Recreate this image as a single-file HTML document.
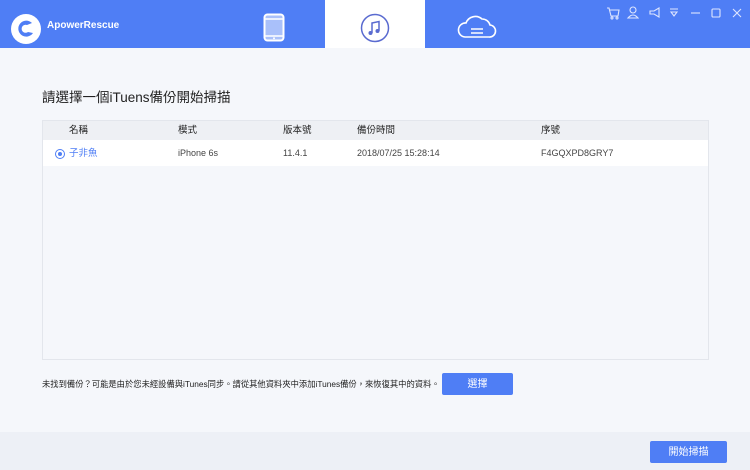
<!DOCTYPE html>
<html><head><meta charset="utf-8"><style>
*{margin:0;padding:0;box-sizing:border-box}
body{width:750px;height:470px;overflow:hidden;background:#f5f7fb;font-family:"Liberation Sans","Noto Sans CJK TC",sans-serif;position:relative;line-height:1}
.hdr{position:absolute;left:0;top:0;width:750px;height:48px;background:#4f7ef5}
.tab{position:absolute;left:325px;top:0;width:100px;height:48px;background:#fff}
.abs{position:absolute}
.t{font-size:11px;color:#222;position:absolute;line-height:1}
.btn{position:absolute;background:#4f7ef5;border-radius:2px;color:#fff;font-size:10px;text-align:center;padding-top:7px}
</style></head><body>
<div class="hdr"></div>
<div class="tab"></div>
<svg class="abs" style="left:9px;top:12px" width="34" height="34" viewBox="0 0 34 34">
<circle cx="17" cy="17" r="15" fill="#fff"/>
<path d="M23 11 A8 8 0 1 0 24 21 L19 20 A4 4 0 1 1 18 13 Z" fill="#4f7ef5"/>
</svg>
<div class="abs" style="left:47px;top:21px;color:#fff;font-size:10px;font-weight:bold">ApowerRescue</div>
<svg class="abs" style="left:263px;top:13px" width="22" height="29" viewBox="0 0 22 29">
<rect x="1.5" y="1.5" width="19" height="26" rx="3" fill="#a9c0fa" stroke="#fff" stroke-width="2"/>
<line x1="1.5" y1="6" x2="20.5" y2="6" stroke="#fff" stroke-width="1.5"/>
<line x1="1.5" y1="23" x2="20.5" y2="23" stroke="#fff" stroke-width="1.5"/>
<circle cx="11" cy="25.3" r="1" fill="#fff"/>
</svg>
<svg class="abs" style="left:360px;top:13px" width="30" height="30" viewBox="0 0 30 30">
<circle cx="15" cy="15" r="13.5" fill="none" stroke="#5a6bd0" stroke-width="1.5"/>
<path d="M12 20 V10 L19 8.5 V18" fill="none" stroke="#5a6bd0" stroke-width="1.5"/>
<circle cx="10.5" cy="20" r="2" fill="#5a6bd0"/><circle cx="17.5" cy="18" r="2" fill="#5a6bd0"/>
</svg>
<svg class="abs" style="left:457px;top:13px" width="40" height="26" viewBox="0 0 40 26">
<path d="M8 24 H32 A6 6 0 0 0 33 12 A8 8 0 0 0 25 6 A10 10 0 0 0 9 10 A7 7 0 0 0 8 24 Z" fill="none" stroke="#fff" stroke-width="1.6"/>
<line x1="14" y1="16" x2="26" y2="16" stroke="#fff" stroke-width="1.5"/>
<line x1="14" y1="20" x2="26" y2="20" stroke="#fff" stroke-width="1.5"/>
</svg>
<svg class="abs" style="left:606px;top:5px" width="140" height="16" viewBox="0 0 140 16" fill="none" stroke="#dfe6ff" stroke-width="1.1">
<path d="M1 3 H3 L5 11 H12 L13 5 H4"/><circle cx="6" cy="13" r="1"/><circle cx="11" cy="13" r="1"/>
<circle cx="27" cy="5" r="3"/><path d="M22 13 Q27 7 32 13 Z"/>
<path d="M44 6 H48 L53 3 V12 L48 9 H44 Z"/>
<path d="M64 4 H72 M65 7 H71 L68 11 Z"/>
<path d="M85 8 H94"/>
<rect x="106" y="4" width="8" height="8" rx="1"/>
<path d="M127 4 L135 12 M135 4 L127 12"/>
</svg>
<div class="abs" style="left:42px;top:91px;font-size:13.5px;color:#222">請選擇一個iTuens備份開始掃描</div>
<div class="abs" style="left:42px;top:120px;width:667px;height:240px;background:#f5f7fb;border:1px solid #e3e6ec"></div>
<div class="abs" style="left:43px;top:121px;width:665px;height:19px;background:#eef0f4"></div>
<div class="abs" style="left:43px;top:140px;width:665px;height:26px;background:#fff"></div>
<div class="t" style="left:69px;top:126px;font-size:9.5px">名稱</div>
<div class="t" style="left:178px;top:126px;font-size:9.5px">模式</div>
<div class="t" style="left:283px;top:126px;font-size:9.5px">版本號</div>
<div class="t" style="left:357px;top:126px;font-size:9.5px">備份時間</div>
<div class="t" style="left:541px;top:126px;font-size:9.5px">序號</div>
<div class="abs" style="left:55px;top:149px;width:10px;height:10px;border:1px solid #4f7ef5;border-radius:50%"></div>
<div class="abs" style="left:58px;top:152px;width:4px;height:4px;background:#4f7ef5;border-radius:50%"></div>
<div class="t" style="left:69px;top:149px;font-size:9.5px;color:#4f7ef5">子非魚</div>
<div class="t" style="left:178px;top:149px;font-size:9px;color:#444">iPhone 6s</div>
<div class="t" style="left:283px;top:149px;font-size:9px;color:#444">11.4.1</div>
<div class="t" style="left:357px;top:149px;font-size:9px;color:#444">2018/07/25 15:28:14</div>
<div class="t" style="left:541px;top:149px;font-size:9px;color:#444">F4GQXPD8GRY7</div>
<div class="abs" style="left:42px;top:380px;font-size:8.3px;color:#222;white-space:nowrap">未找到備份？可能是由於您未經設備與iTunes同步。請從其他資料夾中添加iTunes備份，來恢復其中的資料。</div>
<div class="btn" style="left:442px;top:373px;width:71px;height:22px">選擇</div>
<div class="abs" style="left:0;top:432px;width:750px;height:38px;background:#edf0f6"></div>
<div class="btn" style="left:650px;top:441px;width:77px;height:22px">開始掃描</div>
</body></html>
